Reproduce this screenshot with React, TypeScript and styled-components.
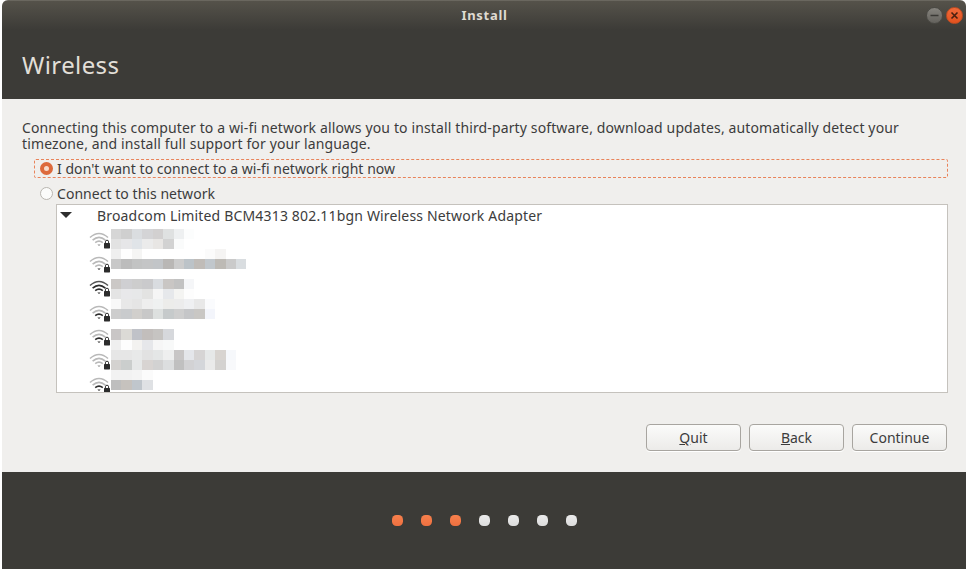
import React from "react";
import styled, { createGlobalStyle } from "styled-components";

const GlobalStyle = createGlobalStyle`
  html, body {
    margin: 0;
    background: #ffffff;
  }
`;

const Window = styled.div`
  width: 964px;
  height: 569px;
  margin-left: 2px;
  display: flex;
  flex-direction: column;
  overflow: hidden;
  border-radius: 6px 6px 0 0;
  background: #f0efed;
  color: #3c3c3c;
  font-family: "Noto Sans", "Open Sans", sans-serif;
  font-size: 14px;
  line-height: 17px;
`;

const TitleBar = styled.div`
  height: 30px;
  flex: none;
  box-sizing: border-box;
  display: flex;
  align-items: center;
  justify-content: flex-end;
  padding-right: 3px;
  gap: 3px;
  position: relative;
  border-top: 1px solid #6a675f;
  background: linear-gradient(#55524a, #3c3b37);
`;

const WindowTitle = styled.div`
  position: absolute;
  left: 1px;
  right: 0;
  top: 6px;
  text-align: center;
  color: #dfdbd2;
  font-weight: 700;
  font-size: 13px;
  letter-spacing: 0.7px;
`;

const WindowButton = styled.div<{ $close?: boolean }>`
  width: 17px;
  height: 17px;
  border-radius: 50%;
  display: flex;
  align-items: center;
  justify-content: center;
  box-sizing: border-box;
  border: 1px solid ${(p) => (p.$close ? "#c24c20" : "#4a4944")};
  background: ${(p) =>
    p.$close
      ? "linear-gradient(#f0693a, #e2521f)"
      : "linear-gradient(#85837d, #64625d)"};
`;

const Header = styled.div`
  height: 69px;
  flex: none;
  box-sizing: border-box;
  padding: 18px 0 0 20px;
  background: #3c3b37;
  color: #e2dfd8;
  font-size: 24px;
  line-height: 33px;
  letter-spacing: 0.4px;
`;

const Content = styled.div`
  flex: 1;
  display: flex;
  flex-direction: column;
  padding: 21px 18px 21px 20px;
`;

const Intro = styled.p`
  margin: 0 0 7px;
  line-height: 16px;
  letter-spacing: 0.13px;
`;

const RadioRow = styled.div<{ $focused?: boolean }>`
  height: 19px;
  box-sizing: border-box;
  margin-left: 12px;
  padding-left: 5px;
  display: flex;
  align-items: center;
  gap: 4px;
  letter-spacing: 0.04px;
  border: 1px dashed ${(p) => (p.$focused ? "#e9835a" : "transparent")};
  border-radius: 2px;
  & + & {
    margin-top: 6px;
  }
`;

const Radio = styled.span<{ $checked?: boolean }>`
  width: 13px;
  height: 13px;
  flex: none;
  box-sizing: border-box;
  border-radius: 50%;
  border: ${(p) => (p.$checked ? "4.5px solid #dd6a3c" : "1px solid #b9b6b0")};
  background: ${(p) => (p.$checked ? "#f8dccd" : "#fbfbfa")};
`;

const NetworkList = styled.div`
  position: relative;
  height: 189px;
  flex: none;
  box-sizing: border-box;
  margin: 1px 0 0 34px;
  overflow: hidden;
  border: 1px solid #c5c2bd;
  background: #ffffff;
`;

const AdapterRow = styled.div`
  height: 20px;
  margin-bottom: 3px;
  display: flex;
  align-items: center;
  padding-left: 3px;
  letter-spacing: 0.17px;
`;

const Expander = styled.span`
  width: 0;
  height: 0;
  margin-right: 25px;
  border-left: 6px solid transparent;
  border-right: 6px solid transparent;
  border-top: 6px solid #2e2e2e;
`;

const NetworkRow = styled.div`
  height: 24.2px;
  padding-left: 32px;
  display: flex;
  align-items: center;
`;

const Mosaic = styled.div`
  position: absolute;
  left: 54px;
  top: 24px;
  display: grid;
  grid-template-columns: repeat(14, 10.43px);
  grid-auto-rows: 10.05px;
`;

const MosaicCell = styled.span<{ $shade: string }>`
  background: ${(p) => p.$shade};
`;

const Actions = styled.div`
  margin-top: auto;
  display: flex;
  justify-content: flex-end;
  gap: 8px;
  padding-right: 1px;
`;

const Button = styled.button`
  width: 95px;
  height: 27px;
  padding: 0;
  font: inherit;
  color: inherit;
  border: 1px solid #a8a5a0;
  border-radius: 4px;
  background: linear-gradient(#fbfbfa, #ecebe9);
  box-shadow: 0 1px 0 #ffffff;
`;

const Footer = styled.div`
  height: 97px;
  flex: none;
  box-sizing: border-box;
  padding-bottom: 1px;
  display: flex;
  align-items: center;
  justify-content: center;
  gap: 18px;
  background: #3c3b37;
`;

const Dot = styled.span<{ $done?: boolean }>`
  width: 11px;
  height: 11px;
  border-radius: 4.5px;
  background: ${(p) =>
    p.$done
      ? "linear-gradient(#f7804c, #ee7040)"
      : "linear-gradient(#ebebeb, #dcdcdc)"};
`;

const WifiIcon = ({ level }: { level: number }) => {
  const light = "#b9b9b9";
  const dark = "#2c2c2c";
  return (
    <svg width="22" height="18" viewBox="0 0 22 18" fill="none">
      <path d="M1 6.5Q10 -1.5 19 6.5" stroke={level > 2 ? "#555" : light} strokeWidth="1.6" />
      <path d="M3.6 9.2Q10 3.6 16.4 9.2" stroke={level > 2 ? dark : light} strokeWidth="1.6" />
      <path d="M6.2 11.6Q10 8.6 13.8 11.6" stroke={level > 1 ? dark : light} strokeWidth="1.6" />
      <path d="M8.4 13.4H11.6L10 15Z" fill={level > 0 ? dark : "#8a8a8a"} />
      <rect x="15" y="12" width="6" height="5.4" rx="0.6" fill="#2c2c2c" />
      <path d="M16.4 12.2V10.8a1.6 1.6 0 0 1 3.2 0V12.2" stroke="#2c2c2c" strokeWidth="1" />
    </svg>
  );
};

const signalLevels = [0, 1, 3, 2, 2, 0, 2];

const mosaicRows: string[][] = [
  ["#d6d6d6", "#cfcfcf", "#dadde0", "#d4d4d6", "#d2d0d0", "#dfe1e1", "#eef0f1", "#fcfdfd"],
  ["#e2e2e2", "#e6e6e8", "#e0e4e8", "#ebebeb", "#e8e6e4", "#d2d2d2", "#fafbfb"],
  ["#efefef", "#fefefe", "#f5f5f4", "#ffffff", "#ffffff", "#ffffff", "#ffffff", "#ffffff", "#ffffff", "#fbfbfb", "#f5f4f3"],
  ["#c8c8c8", "#bcbcbc", "#c2c3c3", "#c4c5c6", "#c2c5c8", "#b9b7b5", "#cccccc", "#bcc3c8", "#c0bcb8", "#c1c7cc", "#bdbab5", "#cacaca", "#d9dde0"],
  [],
  ["#cbc8c6", "#cfcfd2", "#cdcdcd", "#cacacc", "#d9dce0", "#c9c6c4", "#c2c2c2", "#f5f6f8"],
  ["#e4e4e4", "#e8e8ea", "#e7e8e9", "#e3e3e2", "#f5f5f5", "#e6e8eb", "#f4f4f2", "#fdfdfd"],
  ["#f8f8f8", "#e8e8e8", "#e5e5e5", "#eeeeee", "#eff1f1", "#ececea", "#ececec", "#eff0f2", "#e8e8e8", "#fafbfd"],
  ["#cdcdcd", "#c9cbcd", "#d1cfcc", "#c8c8c8", "#dde0df", "#c6cacb", "#cecece", "#c5c6c8", "#c9c7c4", "#f3f5fb"],
  [],
  ["#c9c6c6", "#dcdad6", "#c0c2c8", "#c2bebc", "#c6c4c2", "#d6d8dc"],
  ["#efefef", "#fdfdfd", "#f3f2f0", "#e6e7ea", "#f6f6f6", "#f8f9f9"],
  ["#e6e6e6", "#e6e6e6", "#e8e9e9", "#e2e2e2", "#e4e6e6", "#eeefef", "#c8c6c6", "#e4e6ea", "#d6d4d4", "#e6e8e8", "#d8d4d0", "#f6f8fb"],
  ["#d4d2d0", "#cbcecd", "#e6e8e8", "#d8d4d2", "#d2d2d2", "#dcdedf", "#c0c0c0", "#d2d2d4", "#d4d6da", "#eaeaea", "#d4d2d0", "#f8f9fb"],
  ["#f2f2f2", "#f2f2f2", "#f4f4f4", "#fbfbfb"],
  ["#bebebe", "#c6c2be", "#c0c6cc", "#dfe1e4"],
];

const steps = [true, true, true, false, false, false, false];

export default function App() {
  return (
    <>
      <GlobalStyle />
      <Window>
        <TitleBar>
          <WindowTitle>Install</WindowTitle>
          <WindowButton>
            <svg width="9" height="9" viewBox="0 0 9 9">
              <path d="M0.5 4.5H8.5" stroke="#3a3935" strokeWidth="1.4" />
            </svg>
          </WindowButton>
          <WindowButton $close>
            <svg width="9" height="9" viewBox="0 0 9 9">
              <path d="M1.5 1.5L7.5 7.5M7.5 1.5L1.5 7.5" stroke="#4a2010" strokeWidth="1.6" />
            </svg>
          </WindowButton>
        </TitleBar>
        <Header>Wireless</Header>
        <Content>
          <Intro>
            Connecting this computer to a wi-fi network allows you to install third-party software, download updates, automatically detect your
            <br />
            timezone, and install full support for your language.
          </Intro>
          <RadioRow $focused>
            <Radio $checked />
            I don't want to connect to a wi-fi network right now
          </RadioRow>
          <RadioRow>
            <Radio />
            Connect to this network
          </RadioRow>
          <NetworkList>
            <AdapterRow>
              <Expander />
              Broadcom Limited BCM4313 802.11bgn Wireless Network Adapter
            </AdapterRow>
            {signalLevels.map((level, i) => (
              <NetworkRow key={i}>
                <WifiIcon level={level} />
              </NetworkRow>
            ))}
            <Mosaic>
              {mosaicRows.flatMap((row, r) =>
                Array.from({ length: 14 }, (_, c) => (
                  <MosaicCell key={`${r}-${c}`} $shade={row[c] ?? "transparent"} />
                )),
              )}
            </Mosaic>
          </NetworkList>
          <Actions>
            <Button><u>Q</u>uit</Button>
            <Button><u>B</u>ack</Button>
            <Button>Continue</Button>
          </Actions>
        </Content>
        <Footer>
          {steps.map((done, i) => (
            <Dot key={i} $done={done} />
          ))}
        </Footer>
      </Window>
    </>
  );
}
